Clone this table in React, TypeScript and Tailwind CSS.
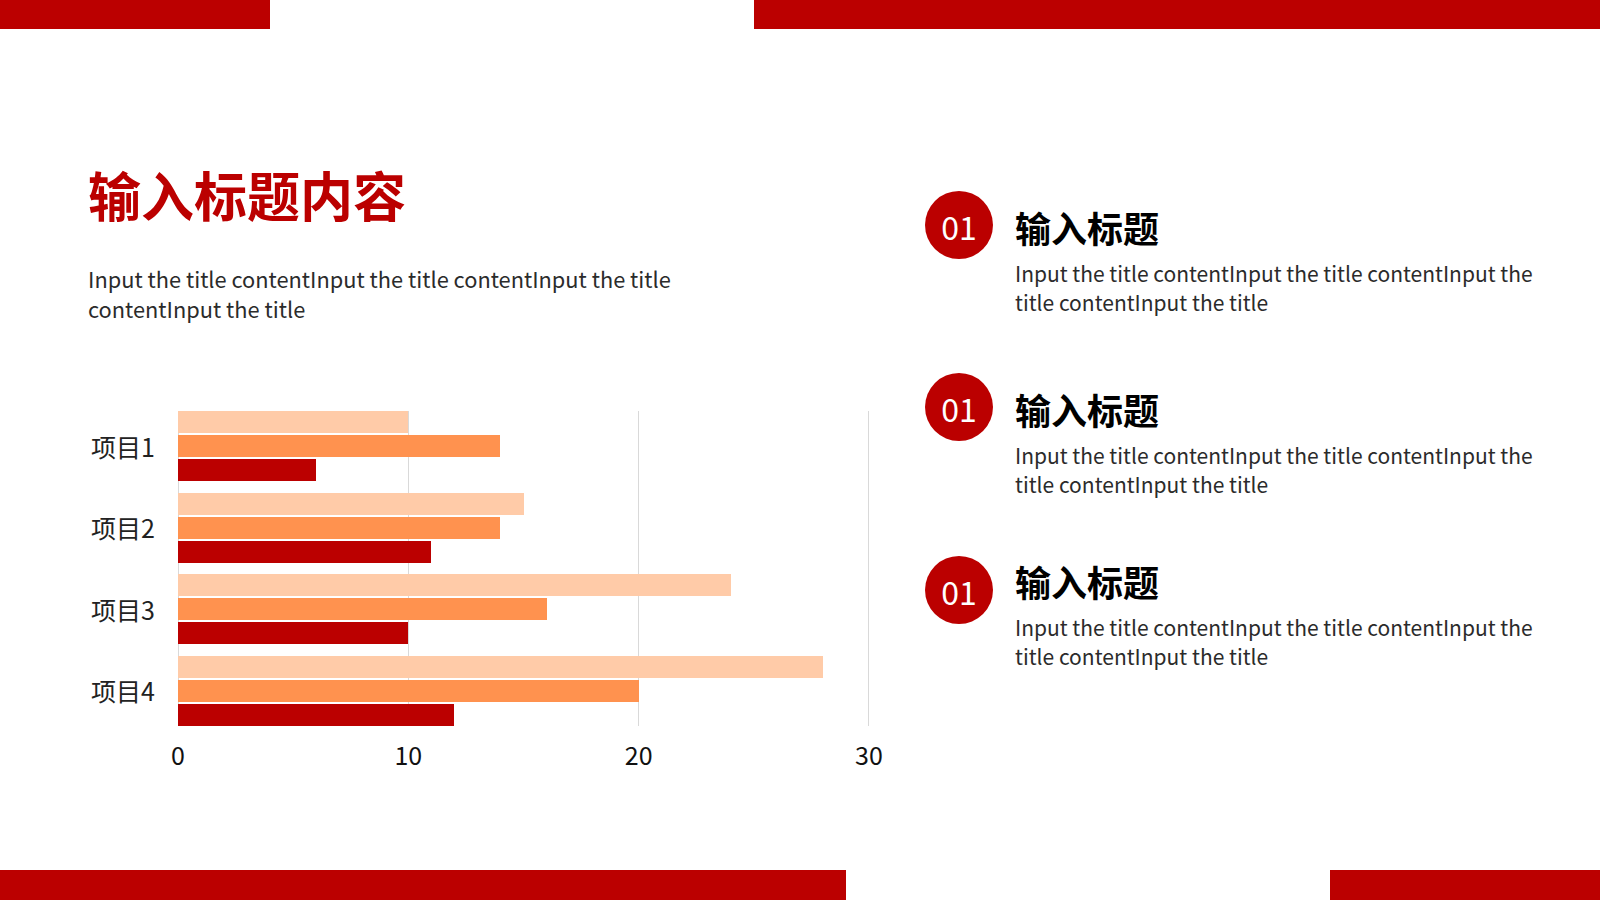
const groups = [
  { label: '项目1', values: [10, 14, 6] },
  { label: '项目2', values: [15, 14, 11] },
  { label: '项目3', values: [24, 16, 10] },
  { label: '项目4', values: [28, 20, 12] },
];

const barColors = ['bg-[#ffcba8]', 'bg-[#ff924f]', 'bg-[#bb0000]'];
const maxValue = 30;
const ticks = [0, 10, 20, 30];

const desc = 'Input the title contentInput the title contentInput the title contentInput the title';

function BarChart() {
  return (
    <div className="mt-[87px]">
      <div className="flex">
        <div className="flex w-[90px] shrink-0 flex-col gap-[11.5px] pl-[3px]">
          {groups.map((g) => (
            <div key={g.label} className="flex h-[70px] items-center text-[25px] leading-none text-[#222]">
              {g.label}
            </div>
          ))}
        </div>
        <div className="relative w-[691px] shrink-0">
          {[0, 230, 460, 690].map((x) => (
            <div key={x} className="absolute top-0 bottom-0 w-px bg-[#d9d9d9]" style={{ left: x }} />
          ))}
          <div className="relative flex flex-col gap-[11.5px]">
            {groups.map((g) => (
              <div key={g.label} className="flex flex-col gap-[2px]">
                {g.values.map((v, i) => (
                  <div
                    key={i}
                    className={`h-[22px] ${barColors[i]}`}
                    style={{ width: `${(v / maxValue) * 100}%` }}
                  />
                ))}
              </div>
            ))}
          </div>
        </div>
      </div>
      <div className="ml-[70px] mt-[13px] flex w-[731px] justify-between">
        {ticks.map((t) => (
          <span key={t} className="w-[40px] text-center text-[25px] leading-[30px] text-[#111]">
            {t}
          </span>
        ))}
      </div>
    </div>
  );
}

function Item({ raised = false }: { raised?: boolean }) {
  return (
    <div className="flex gap-[22px]">
      <div className="flex h-[68px] w-[68px] shrink-0 items-center justify-center rounded-full bg-[#bb0000] pt-[2px] text-[32px] leading-none text-white">
        01
      </div>
      <div className={`${raised ? 'mt-[4px]' : 'mt-[15px]'} w-[530px]`}>
        <h3 className="text-[36px] font-bold leading-[43px] text-black">输入标题</h3>
        <p className="mt-[10px] text-[21px] leading-[28.5px] text-[#2b2b2b]">{desc}</p>
      </div>
    </div>
  );
}

export default function App() {
  return (
    <div className="flex h-[900px] w-[1600px] flex-col overflow-hidden bg-white font-['Noto_Sans_CJK_SC',sans-serif]">
      <div className="flex h-[29px] shrink-0 justify-between">
        <div className="w-[270px] bg-[#bb0000]" />
        <div className="w-[846px] bg-[#bb0000]" />
      </div>

      <div className="flex flex-1">
        <section className="w-[925px] shrink-0 pl-[88px] pt-[133px]">
          <h1 className="text-[53px] font-bold leading-[64px] text-[#bb0000]">输入标题内容</h1>
          <p className="mt-[38px] w-[620px] text-[21.8px] leading-[30px] text-[#2b2b2b]">{desc}</p>
          <BarChart />
        </section>

        <section className="flex flex-1 flex-col pt-[162px]">
          <Item />
          <div className="mt-[57px]">
            <Item />
          </div>
          <div className="mt-[58px]">
            <Item raised />
          </div>
        </section>
      </div>

      <div className="flex h-[30px] shrink-0 justify-between">
        <div className="w-[846px] bg-[#bb0000]" />
        <div className="w-[270px] bg-[#bb0000]" />
      </div>
    </div>
  );
}
